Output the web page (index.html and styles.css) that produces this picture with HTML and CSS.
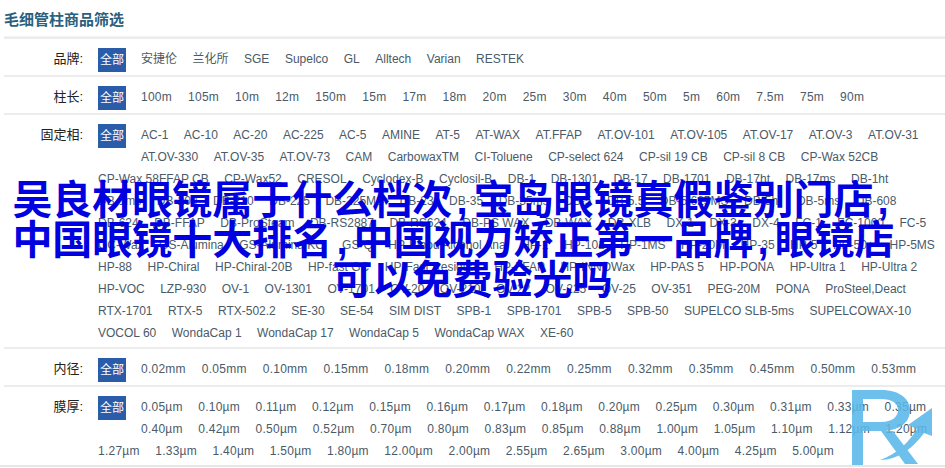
FILE: index.html
```html
<!DOCTYPE html>
<html lang="zh-CN">
<head>
    <meta charset="UTF-8">
    <title>毛细管柱商品筛选</title>
    <link rel="stylesheet" href="styles.css">
</head>
<body>
    <div class="filter">
        <h2 class="filter-title">毛细管柱商品筛选</h2>

        <div class="filter-row">
            <div class="filter-label">品牌:</div>
            <div class="filter-items">
                <a class="all">全部</a>
                <a>安捷伦</a><a>兰化所</a><a>SGE</a><a>Supelco</a><a>GL</a><a>Alltech</a><a>Varian</a><a>RESTEK</a>
            </div>
        </div>

        <div class="filter-row">
            <div class="filter-label">柱长:</div>
            <div class="filter-items numeric">
                <a class="all">全部</a>
                <a>100m</a><a>105m</a><a>10m</a><a>12m</a><a>150m</a><a>15m</a><a>17m</a><a>18m</a><a>20m</a><a>25m</a><a>30m</a><a>40m</a><a>50m</a><a>5m</a><a>60m</a><a>7.5m</a><a>75m</a><a>90m</a>
            </div>
        </div>

        <div class="filter-row">
            <div class="filter-label">固定相:</div>
            <div class="filter-items">
                <a class="all">全部</a>
                <a>AC-1</a><a>AC-10</a><a>AC-20</a><a>AC-225</a><a>AC-5</a><a>AMINE</a><a>AT-5</a><a>AT-WAX</a><a>AT.FFAP</a><a>AT.OV-101</a><a>AT.OV-105</a><a>AT.OV-17</a><a>AT.OV-3</a><a>AT.OV-31</a><br>
                <a>AT.OV-330</a><a>AT.OV-35</a><a>AT.OV-73</a><a>CAM</a><a>CarbowaxTM</a><a>CI-Toluene</a><a>CP-select 624</a><a>CP-sil 19 CB</a><a>CP-sil 8 CB</a><a>CP-Wax 52CB</a><br>
                <a>CP-Wax 58FFAP CB</a><a>CP-Wax52</a><a>CRESOL</a><a>Cyclodex-B</a><a>Cyclosil-B</a><a>DB-1</a><a>DB-1301</a><a>DB-17</a><a>DB-1701</a><a>DB-17ht</a><a>DB-17ms</a><a>DB-1ht</a><br>
                <a>DB-1ms</a><a>DB-200</a><a>DB-210</a><a>DB-225</a><a>DB-225MS</a><a>DB-23</a><a>DB-35</a><a>DB-35ms</a><a>DB-5</a><a>DB-5.5</a><a>DB-5.625MS</a><a>DB-5ht</a><a>DB-5ms</a><a>DB-608</a><br>
                <a>DB-624</a><a>DB-FFAP</a><a>DB-ProSteam</a><a>DB-RS2887</a><a>DB-RS624</a><a>DB-PS WAX</a><a>DB-WAX</a><a>DB-XLB</a><a>DX-1</a><a>DX-3</a><a>DX-4</a><a>FC-1</a><a>FC-1000</a><a>FC-5</a><br>
                <a>GC-Wax</a><a>GS-Alumina</a><a>GS-Alumina KCl</a><a>GS-Q</a><a>HP-Blood Alcohol Ana</a><a>HP-1</a><a>HP-101</a><a>HP-1MS</a><a>HP-20M</a><a>HP-35</a><a>HP-5</a><a>HP-50+</a><a>HP-5MS</a><br>
                <a>HP-88</a><a>HP-Chiral</a><a>HP-Chiral-20B</a><a>HP-fast GC</a><a>HP-Fast Residual</a><a>HP-FFAP</a><a>HP-INNOWax</a><a>HP-PAS 5</a><a>HP-PONA</a><a>HP-Ultra 1</a><a>HP-Ultra 2</a><br>
                <a>HP-VOC</a><a>LZP-930</a><a>OV-1</a><a>OV-1301</a><a>OV-1701</a><a>OV-20</a><a>OV-210</a><a>OV-22</a><a>OV-225</a><a>OV-25</a><a>OV-351</a><a>PEG-20M</a><a>PONA</a><a>ProSteel,Deact</a><br>
                <a>RTX-1701</a><a>RTX-5</a><a>RTX-502.2</a><a>SE-30</a><a>SE-54</a><a>SIM DIST</a><a>SPB-1</a><a>SPB-1701</a><a>SPB-5</a><a>SPB-50</a><a>SUPELCO SLB-5ms</a><a>SUPELCOWAX-10</a><br>
                <a>VOCOL 60</a><a>WondaCap 1</a><a>WondaCap 17</a><a>WondaCap 5</a><a>WondaCap WAX</a><a>XE-60</a>
            </div>
        </div>

        <div class="filter-row">
            <div class="filter-label">内径:</div>
            <div class="filter-items numeric">
                <a class="all">全部</a>
                <a>0.02mm</a><a>0.05mm</a><a>0.10mm</a><a>0.15mm</a><a>0.18mm</a><a>0.20mm</a><a>0.22mm</a><a>0.25mm</a><a>0.32mm</a><a>0.35mm</a><a>0.45mm</a><a>0.50mm</a><a>0.53mm</a>
            </div>
        </div>

        <div class="filter-row">
            <div class="filter-label">膜厚:</div>
            <div class="filter-items numeric micron">
                <a class="all">全部</a>
                <a>0.05µm</a><a>0.10µm</a><a>0.11µm</a><a>0.12µm</a><a>0.15µm</a><a>0.16µm</a><a>0.17µm</a><a>0.18µm</a><a>0.20µm</a><a>0.25µm</a><a>0.30µm</a><a>0.31µm</a><a>0.33µm</a><a>0.35µm</a><br>
                <a>0.40µm</a><a>0.42µm</a><a>0.50µm</a><a>0.52µm</a><a>0.70µm</a><a>0.80µm</a><a>0.83µm</a><a>0.85µm</a><a>0.88µm</a><a>1.00µm</a><a>1.05µm</a><a>1.10µm</a><a>1.12µm</a><a>1.20µm</a><br>
                <a>1.27µm</a><a>1.33µm</a><a>1.40µm</a><a>1.50µm</a><a>1.80µm</a><a>12.00µm</a><a>2.00µm</a><a>2.55µm</a><a>2.65µm</a><a>3.00µm</a><a>4.00µm</a><a>4.25µm</a><a>5.00µm</a>
            </div>
        </div>
    </div>

    <h1 class="headline">
        <span class="line shifted">吴良材眼镜属于什么档次<span class="comma">,</span>宝岛眼镜真假鉴别门店<span class="comma">,</span></span>
        <span class="line shifted">中国眼镜十大排名<span class="comma">,</span>中国视力矫正第一品牌<span class="comma">,</span>眼镜店</span>
        <span class="line">可以免费验光吗</span>
    </h1>

    <!-- Rx mark, sits over the last rows -->
    <svg class="watermark" viewBox="0 0 92 76">
        <path d="M1 0H30C50 0 59 10 59 20C59 33 48 41 30 41H12V75H1ZM12 9V32H30C41 32 47 27 47 20C47 13 41 9 30 9Z"/>
        <path d="M30 41H42L67 74H54Z"/>
        <path d="M81 18L57 35L66 39C58 52 46 64 29 70C47 70 62 58 73 43L81 46Z"/>
    </svg>
</body>
</html>
```

FILE: styles.css
```css
body {
    margin: 0;
    width: 945px;
    height: 468px;
    overflow: hidden;
    background: #fff;
    font-family: "Liberation Sans", "Noto Sans CJK SC", sans-serif;
    font-size: 12px;
    color: #4a5a68;
}
.filter {
    padding-left: 4px;
    border-bottom: 2px solid #e6e6e6;
}
.filter-title {
    margin: 0;
    height: 33px;
    line-height: 40px;
    font-size: 15px;
    font-weight: bold;
    color: #2a5f80;
    border-bottom: 1px solid #f2f2f2;
    padding-bottom: 3px;
}
.filter-row {
    display: flex;
    border-top: 2px solid #ececec;
    padding: 9px 0 3px;
    min-height: 24px;
}
.filter-label {
    width: 79px;
    flex: none;
    text-align: right;
    line-height: 22px;
    font-size: 13px;
    color: #222;
}
.filter-items {
    margin-left: 15px;
    flex: 1;
    line-height: 22px;
    white-space: nowrap;
}
.filter-items a {
    display: inline-block;
    margin-right: 15.5px;
}
.filter-items.numeric {
    letter-spacing: 0.25px;
}
.filter-items.numeric a {
    margin-right: 16px;
}
.filter-items.micron a {
    margin-right: 15.5px;
}
.filter-items a.all {
    float: left;
    width: 28px;
    height: 24px;
    line-height: 24px;
    margin: 0 15px 0 0;
    text-align: center;
    letter-spacing: 0;
    color: #fff;
    background: #2a5caa;
}
.headline {
    position: absolute;
    left: 0;
    top: 180px;
    width: 945px;
    margin: 0;
    text-align: center;
    font-size: 40px;
    line-height: 40px;
    font-weight: bold;
    color: #0000e0;
}
.line {
    display: block;
}
.line.shifted {
    margin-right: 38px;
}
.comma {
    padding-left: 4px;
    letter-spacing: 6px;
}
.watermark {
    position: absolute;
    left: 851px;
    top: 390px;
    width: 92px;
    height: 76px;
    fill: #5bb8ea;
    opacity: 0.88;
}
```
